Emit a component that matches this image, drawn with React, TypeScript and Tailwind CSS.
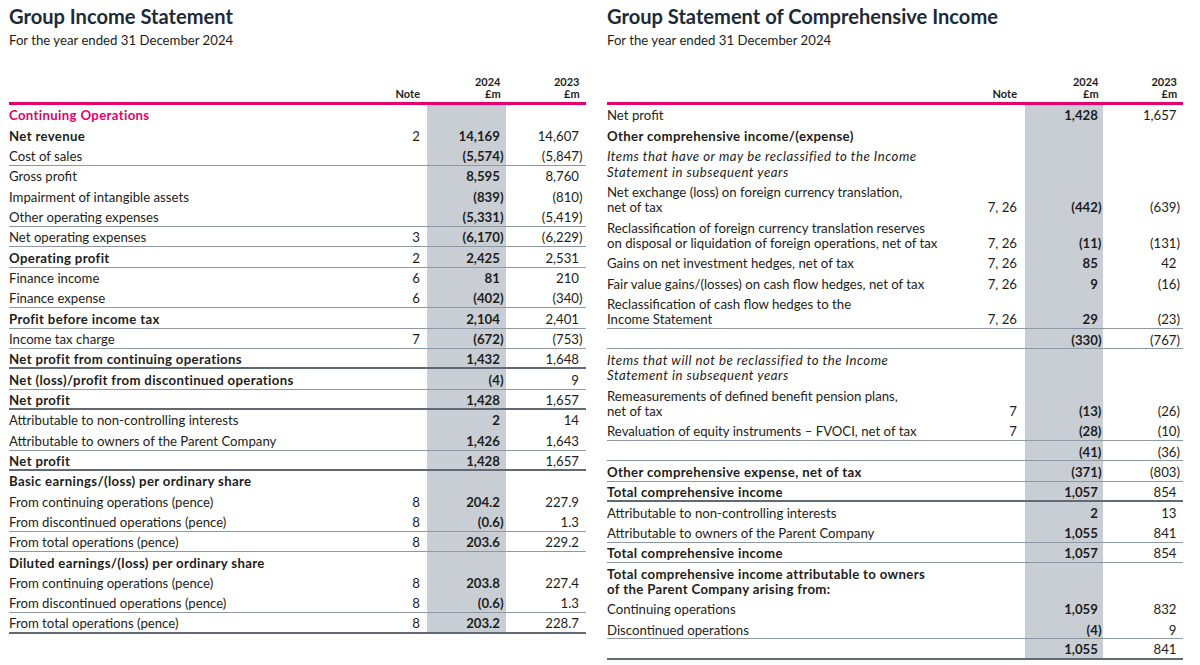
import React from "react";

type Row = {
  label?: React.ReactNode;
  note?: string;
  a?: string;
  b?: string;
  bold?: boolean;
  pink?: boolean;
  italic?: boolean;
  double?: boolean;
  border?: "thin" | "thick";
};

const leftRows: Row[] = [
  { label: "Continuing Operations", pink: true, bold: true },
  { label: "Net revenue", bold: true, note: "2", a: "14,169", b: "14,607" },
  { label: "Cost of sales", a: "(5,574)", b: "(5,847)", border: "thin" },
  { label: "Gross profit", a: "8,595", b: "8,760" },
  { label: "Impairment of intangible assets", a: "(839)", b: "(810)" },
  { label: "Other operating expenses", a: "(5,331)", b: "(5,419)", border: "thin" },
  { label: "Net operating expenses", note: "3", a: "(6,170)", b: "(6,229)", border: "thin" },
  { label: "Operating profit", bold: true, note: "2", a: "2,425", b: "2,531", border: "thin" },
  { label: "Finance income", note: "6", a: "81", b: "210" },
  { label: "Finance expense", note: "6", a: "(402)", b: "(340)", border: "thin" },
  { label: "Profit before income tax", bold: true, a: "2,104", b: "2,401", border: "thin" },
  { label: "Income tax charge", note: "7", a: "(672)", b: "(753)", border: "thin" },
  { label: "Net profit from continuing operations", bold: true, a: "1,432", b: "1,648", border: "thick" },
  { label: "Net (loss)/profit from discontinued operations", bold: true, a: "(4)", b: "9", border: "thin" },
  { label: "Net profit", bold: true, a: "1,428", b: "1,657", border: "thick" },
  { label: "Attributable to non-controlling interests", a: "2", b: "14" },
  { label: "Attributable to owners of the Parent Company", a: "1,426", b: "1,643", border: "thin" },
  { label: "Net profit", bold: true, a: "1,428", b: "1,657", border: "thick" },
  { label: "Basic earnings/(loss) per ordinary share", bold: true },
  { label: "From continuing operations (pence)", note: "8", a: "204.2", b: "227.9" },
  { label: "From discontinued operations (pence)", note: "8", a: "(0.6)", b: "1.3", border: "thin" },
  { label: "From total operations (pence)", note: "8", a: "203.6", b: "229.2", border: "thin" },
  { label: "Diluted earnings/(loss) per ordinary share", bold: true },
  { label: "From continuing operations (pence)", note: "8", a: "203.8", b: "227.4" },
  { label: "From discontinued operations (pence)", note: "8", a: "(0.6)", b: "1.3", border: "thin" },
  { label: "From total operations (pence)", note: "8", a: "203.2", b: "228.7", border: "thick" },
];

const two = (a: string, b: string) => (
  <>
    {a}
    <br />
    {b}
  </>
);

const rightRows: Row[] = [
  { label: "Net profit", a: "1,428", b: "1,657" },
  { label: "Other comprehensive income/(expense)", bold: true },
  {
    label: two("Items that have or may be reclassified to the Income", "Statement in subsequent years"),
    italic: true,
    double: true,
  },
  {
    label: two("Net exchange (loss) on foreign currency translation,", "net of tax"),
    double: true,
    note: "7, 26",
    a: "(442)",
    b: "(639)",
  },
  {
    label: two(
      "Reclassification of foreign currency translation reserves",
      "on disposal or liquidation of foreign operations, net of tax"
    ),
    double: true,
    note: "7, 26",
    a: "(11)",
    b: "(131)",
  },
  { label: "Gains on net investment hedges, net of tax", note: "7, 26", a: "85", b: "42" },
  { label: "Fair value gains/(losses) on cash flow hedges, net of tax", note: "7, 26", a: "9", b: "(16)" },
  {
    label: two("Reclassification of cash flow hedges to the", "Income Statement"),
    double: true,
    note: "7, 26",
    a: "29",
    b: "(23)",
    border: "thin",
  },
  { a: "(330)", b: "(767)", border: "thin" },
  {
    label: two("Items that will not be reclassified to the Income", "Statement in subsequent years"),
    italic: true,
    double: true,
  },
  {
    label: two("Remeasurements of defined benefit pension plans,", "net of tax"),
    double: true,
    note: "7",
    a: "(13)",
    b: "(26)",
  },
  { label: "Revaluation of equity instruments \u2013 FVOCI, net of tax", note: "7", a: "(28)", b: "(10)", border: "thin" },
  { a: "(41)", b: "(36)", border: "thin" },
  { label: "Other comprehensive expense, net of tax", bold: true, a: "(371)", b: "(803)", border: "thin" },
  { label: "Total comprehensive income", bold: true, a: "1,057", b: "854", border: "thick" },
  { label: "Attributable to non-controlling interests", a: "2", b: "13" },
  { label: "Attributable to owners of the Parent Company", a: "1,055", b: "841", border: "thin" },
  { label: "Total comprehensive income", bold: true, a: "1,057", b: "854", border: "thin" },
  {
    label: two("Total comprehensive income attributable to owners", "of the Parent Company arising from:"),
    bold: true,
    double: true,
  },
  { label: "Continuing operations", a: "1,059", b: "832" },
  { label: "Discontinued operations", a: "(4)", b: "9", border: "thin" },
  { a: "1,055", b: "841", border: "thick" },
];

function Num({ v }: { v?: string }) {
  if (!v) return null;
  if (v.startsWith("(")) return <span>{v}</span>;
  return (
    <span>
      {v}
      <span className="invisible">)</span>
    </span>
  );
}

function TableRow({ r, side }: { r: Row; side: "l" | "r" }) {
  const h = r.double ? "h-[35.7px]" : "h-[20.33px]";
  const border =
    r.border === "thin"
      ? "border-b border-[#8e98a2]"
      : r.border === "thick"
      ? "border-b-2 border-[#5f6a75]"
      : "";
  const pb = r.border === "thin" ? "pb-[0.5px]" : r.border === "thick" ? "pb-0" : "pb-[1.5px]";
  const cell = `flex flex-col justify-end ${pb} leading-[15.35px]`;
  return (
    <div className={`flex ${h} ${border}`}>
      <div
        className={`flex-1 whitespace-nowrap ${cell} ${r.bold ? "font-bold tracking-[0.35px]" : ""} ${
          r.pink ? "text-[#e4006b]" : ""
        } ${r.italic ? "italic tracking-[0.5px]" : ""}`}
      >
        <div>{r.label}</div>
      </div>
      <div className={`w-[40px] text-right ${cell}`}>
        <div>{r.note}</div>
      </div>
      <div className={side === "l" ? "w-[7px]" : "w-[8px]"} />
      <div
        className={`${side === "l" ? "w-[79px] pr-[2.5px]" : "w-[78px] pr-[1.5px]"} bg-[#c9ced4] text-right font-bold ${cell}`}
      >
        <div>
          <Num v={r.a} />
        </div>
      </div>
      <div className={`w-[80px] text-right ${side === "l" ? "pr-[3.5px]" : "pr-[3px]"} ${cell}`}>
        <div>
          <Num v={r.b} />
        </div>
      </div>
    </div>
  );
}

function Panel({
  title,
  rows,
  side,
  width,
}: {
  title: string;
  rows: Row[];
  side: "l" | "r";
  width: string;
}) {
  return (
    <div className={`${width} flex flex-col`}>
      <div className="pt-[4px] text-[20.1px] leading-[24px] font-bold text-[#1e2b37]">{title}</div>
      <div className="mt-[4px] text-[13.2px] leading-[17px]">For the year ended 31 December 2024</div>
      <div className="flex h-[56px] border-b-[3px] border-[#e4006b] text-[11px] font-bold leading-[12px]">
        <div className="flex-1" />
        <div className="w-[40px] text-right flex flex-col justify-end pb-[2.5px]">Note</div>
        <div className={side === "l" ? "w-[7px]" : "w-[8px]"} />
        <div
          className={`${side === "l" ? "w-[79px] pr-[2.5px]" : "w-[78px] pr-[1.5px]"} text-right flex flex-col justify-end pb-[2.5px]`}
        >
          <div>
            2024<span className="invisible">)</span>
          </div>
          <div>
            £m<span className="invisible">)</span>
          </div>
        </div>
        <div
          className={`w-[80px] text-right ${side === "l" ? "pr-[3.5px]" : "pr-[3px]"} flex flex-col justify-end pb-[2.5px]`}
        >
          <div>
            2023<span className="invisible">)</span>
          </div>
          <div>
            £m<span className="invisible">)</span>
          </div>
        </div>
      </div>
      <div className="text-[13.2px]">
        {rows.map((r, i) => (
          <TableRow key={i} r={r} side={side} />
        ))}
      </div>
    </div>
  );
}

export default function App() {
  return (
    <div className="w-[1200px] h-[665px] overflow-hidden bg-white text-[#1d1d1b] font-['Lato',sans-serif] flex pl-[9px] gap-[21px]">
      <Panel title="Group Income Statement" rows={leftRows} side="l" width="w-[577px]" />
      <Panel title="Group Statement of Comprehensive Income" rows={rightRows} side="r" width="w-[576px]" />
    </div>
  );
}
